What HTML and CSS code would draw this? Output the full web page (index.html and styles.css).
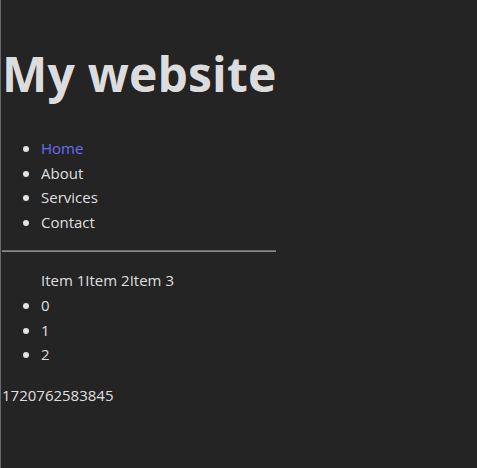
FILE: index.html
```html
<!DOCTYPE html>
<html lang="en">
<head>
<meta charset="utf-8">
<title>My website</title>
<link rel="stylesheet" href="styles.css">
</head>
<body>
<div class="app">
  <h1 class="title">My website</h1>
  <ul class="nav">
    <li><a class="link" href="#">Home</a></li>
    <li>About</li>
    <li>Services</li>
    <li>Contact</li>
  </ul>
  <hr class="rule">
  <ul class="items">
    <div class="row">Item 1Item 2Item 3</div>
    <li>0</li>
    <li>1</li>
    <li>2</li>
  </ul>
  <p class="stamp">1720762583845</p>
</div>
</body>
</html>
```
FILE: styles.css
```css
html, body {
  margin: 0;
  padding: 0;
  background: #242424;
}
body {
  font-family: "Open Sans", "Noto Sans", sans-serif;
  font-size: 15px;
  line-height: 24.6px;
  color: rgba(255, 255, 255, 0.87);
  min-height: 100vh;
  box-sizing: border-box;
  border-left: 1px solid #6a6a6a;
  padding-left: 1px;
}
.app {
  display: flex;
  flex-direction: column;
  width: 274px;
  padding-top: 0.1px;
}
.title {
  font-size: 48px;
  line-height: 68px;
  font-weight: 700;
  margin: 40px 0 28px;
  letter-spacing: 0.2px;
  white-space: nowrap;
}
.nav, .items {
  margin: 0;
  padding-left: 39px;
  list-style: disc;
}
.nav li::marker, .items li::marker {
  font-size: 16px;
}
.link {
  color: #646cff;
  text-decoration: none;
}
.rule {
  margin: 16px 0;
  border: none;
  border-top: 1px solid #6c6c6c;
  border-bottom: 1px solid #8a8a8a;
  height: 0;
}
.stamp {
  margin: 16px 0;
}
```
